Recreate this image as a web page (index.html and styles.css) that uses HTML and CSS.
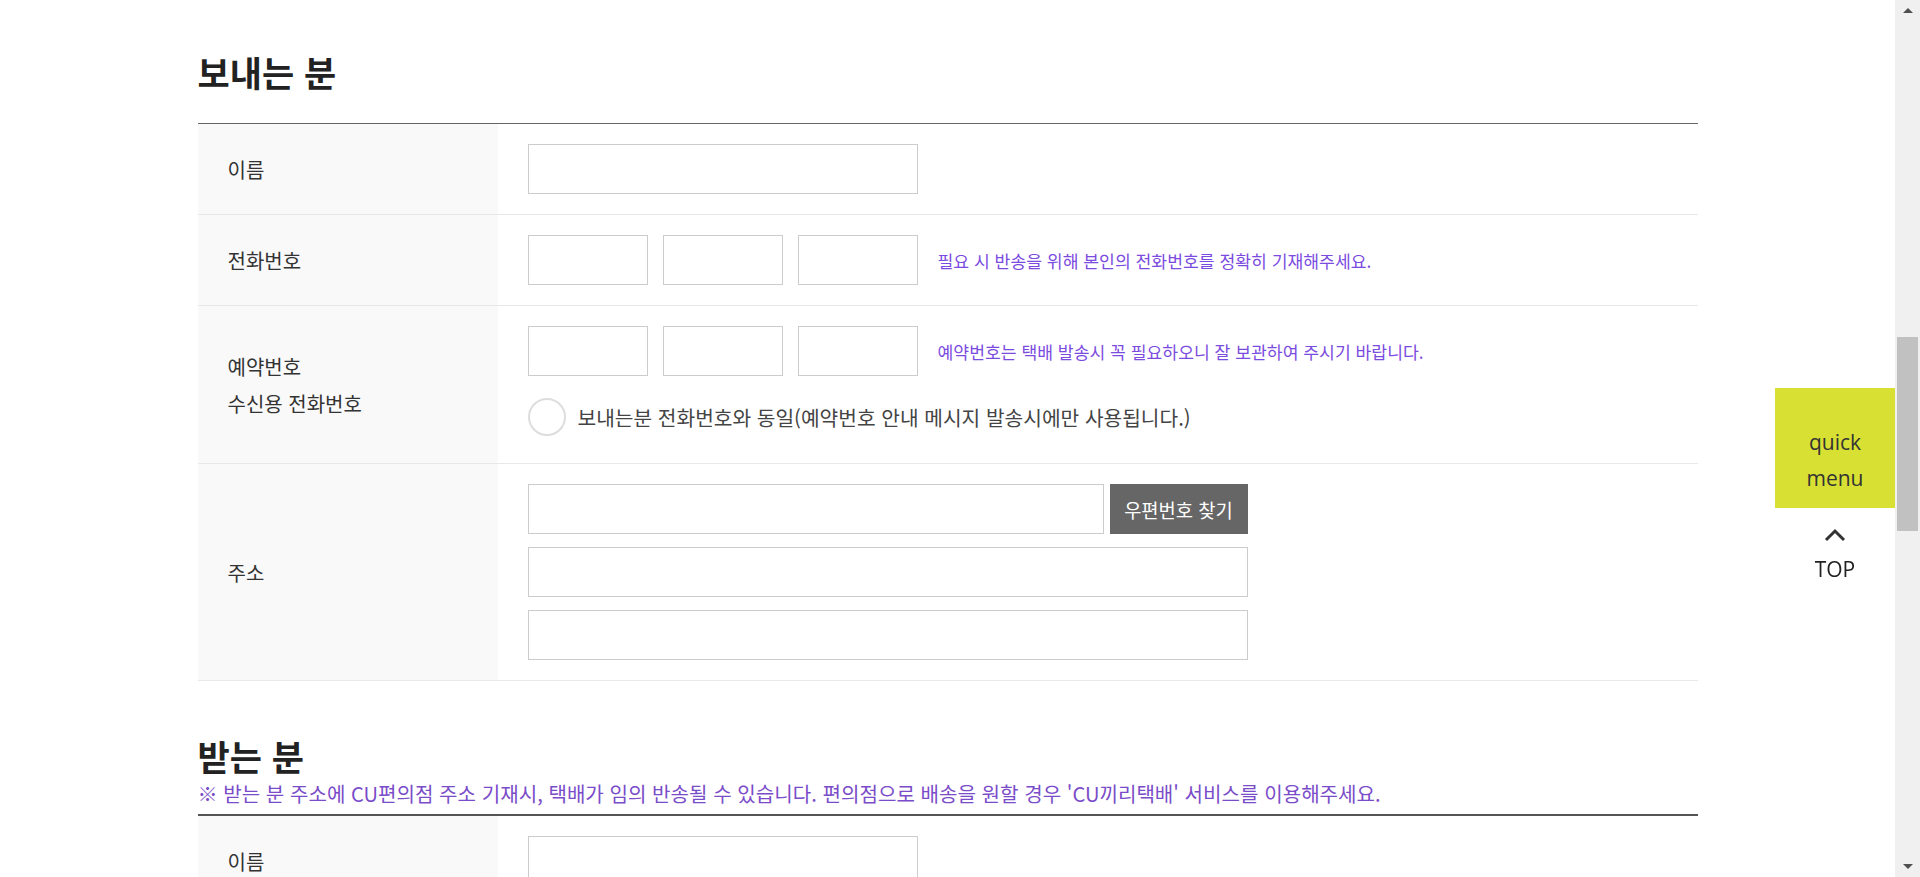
FILE: index.html
```html
<!DOCTYPE html>
<html lang="ko">
<head>
<meta charset="utf-8">
<title>택배 예약</title>
<link rel="stylesheet" href="styles.css">
</head>
<body>
<div class="page">
  <div class="container">
    <section class="section sender">
      <h2 class="section-title">보내는 분</h2>
      <div class="form-table thin">
        <div class="row">
          <div class="label">이름</div>
          <div class="value"><input class="inp name" type="text"></div>
        </div>
        <div class="row">
          <div class="label">전화번호</div>
          <div class="value inline">
            <input class="inp phone" type="text">
            <input class="inp phone" type="text">
            <input class="inp phone" type="text">
            <span class="help">필요 시 반송을 위해 본인의 전화번호를 정확히 기재해주세요.</span>
          </div>
        </div>
        <div class="row">
          <div class="label">예약번호<br>수신용 전화번호</div>
          <div class="value">
            <div class="inline">
              <input class="inp phone" type="text">
              <input class="inp phone" type="text">
              <input class="inp phone" type="text">
              <span class="help">예약번호는 택배 발송시 꼭 필요하오니 잘 보관하여 주시기 바랍니다.</span>
            </div>
            <label class="radio-line"><span class="radio"></span><span class="radio-text">보내는분 전화번호와 동일(예약번호 안내 메시지 발송시에만 사용됩니다.)</span></label>
          </div>
        </div>
        <div class="row">
          <div class="label">주소</div>
          <div class="value addr">
            <div class="addr-line">
              <input class="inp zip" type="text"><button class="btn-zip" type="button">우편번호 찾기</button>
            </div>
            <input class="inp addr-full" type="text">
            <input class="inp addr-full" type="text">
          </div>
        </div>
      </div>
    </section>

    <section class="section receiver">
      <h2 class="section-title">받는 분</h2>
      <p class="notice">※ 받는 분 주소에 CU편의점 주소 기재시, 택배가 임의 반송될 수 있습니다. 편의점으로 배송을 원할 경우 'CU끼리택배' 서비스를 이용해주세요.</p>
      <div class="form-table thick">
        <div class="row">
          <div class="label">이름</div>
          <div class="value"><input class="inp name" type="text"></div>
        </div>
      </div>
    </section>
  </div>
</div>

<div class="quick">
  <a class="quick-menu" href="#">quick<br>menu</a>
  <a class="top-btn" href="#">
    <svg class="chev" width="22" height="14" viewBox="0 0 22 14"><polyline points="2,12 11,3 20,12" fill="none" stroke="#333" stroke-width="3"/></svg>
    <span>TOP</span>
  </a>
</div>

<div class="scrollbar">
  <span class="arrow up"></span>
  <span class="thumb"></span>
  <span class="arrow down"></span>
</div>
</body>
</html>
```

FILE: styles.css
```css
html, body {
  margin: 0;
  padding: 0;
  height: 100%;
  overflow: hidden;
  background: #fff;
}
body {
  font-family: "Noto Sans CJK KR", "Noto Sans", sans-serif;
  color: #333;
}
.page {
  margin-right: 25px;
}
.container {
  width: 1500px;
  margin: 0 auto;
}
.section-title {
  margin: 0;
  font-size: 35px;
  line-height: 35px;
  font-weight: 700;
  color: #222;
}
.sender {
  padding-top: 54px;
}
.sender .section-title {
  margin-bottom: 34px;
}
.receiver {
  padding-top: 57px;
}
.notice {
  margin: 9px 0 8px;
  font-size: 20.1px;
  line-height: 24px;
  color: #7a4cc9;
  white-space: nowrap;
}
.form-table.thin { border-top: 1px solid #666; }
.form-table.thick { border-top: 2px solid #555; }
.row {
  display: grid;
  grid-template-columns: 300px 1fr;
  border-bottom: 1px solid #e8e8e8;
}
.label {
  background: #f9f9f9;
  padding: 0 30px;
  display: flex;
  align-items: center;
  font-size: 20px;
  line-height: 37px;
  color: #333;
}
.value {
  padding: 20px 30px;
}
.inline {
  display: flex;
  align-items: center;
  gap: 15px;
}
.inp {
  box-sizing: border-box;
  height: 50px;
  border: 1px solid #ccc;
  background: #fff;
  margin: 0;
  padding: 0 10px;
  font-family: inherit;
  display: block;
}
.name { width: 390px; }
.phone { width: 120px; }
.help {
  margin-left: 5px;
  font-size: 17.2px;
  color: #7b4be0;
  white-space: nowrap;
}
.radio-line {
  display: flex;
  align-items: center;
  height: 38px;
  margin: 22px 0 7px;
}
.radio {
  box-sizing: border-box;
  width: 38px;
  height: 38px;
  border: 2px solid #ddd;
  border-radius: 50%;
  background: #fff;
}
.radio-text {
  margin-left: 12px;
  font-size: 20.3px;
  color: #444;
  white-space: nowrap;
}
.addr {
  display: flex;
  flex-direction: column;
  gap: 13px;
}
.addr-line {
  display: flex;
  gap: 6px;
}
.zip { width: 576px; }
.btn-zip {
  width: 138px;
  height: 50px;
  border: 0;
  background: #666;
  color: #fff;
  font-family: inherit;
  font-size: 18.75px;
  padding: 0;
}
.addr-full { width: 720px; }

.quick {
  position: fixed;
  top: 388px;
  right: 25px;
  width: 120px;
  display: flex;
  flex-direction: column;
  align-items: center;
  font-family: "Open Sans", "Noto Sans", sans-serif;
}
.quick-menu {
  box-sizing: border-box;
  width: 120px;
  height: 120px;
  padding-top: 36px;
  background: #d8e033;
  color: #333;
  text-align: center;
  font-size: 21px;
  line-height: 36px;
  text-decoration: none;
}
.top-btn {
  display: flex;
  flex-direction: column;
  align-items: center;
  margin-top: 20px;
  color: #222;
  text-decoration: none;
  font-size: 21px;
  line-height: 26px;
}
.chev { display: block; margin-bottom: 14px; }

.scrollbar {
  position: fixed;
  top: 0;
  right: 0;
  width: 25px;
  height: 100%;
  background: #f0f0f0;
}
.thumb {
  position: absolute;
  left: 2px;
  top: 337px;
  width: 21px;
  height: 194px;
  background: #c1c1c1;
}
.arrow {
  position: absolute;
  left: 8px;
  width: 0;
  height: 0;
  border-left: 5px solid transparent;
  border-right: 5px solid transparent;
}
.arrow.up { top: 8px; border-bottom: 5px solid #505050; }
.arrow.down { bottom: 8px; border-top: 5px solid #505050; }
```
